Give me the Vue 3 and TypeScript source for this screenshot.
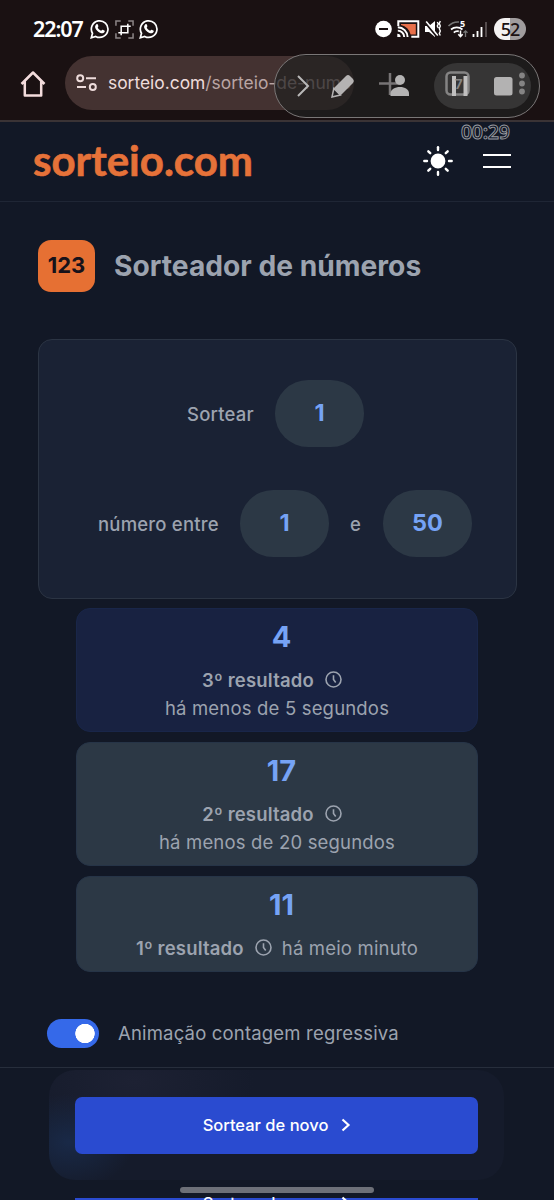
<script setup lang="ts">
interface Result {
  value: number
  label: string
  ago: string
  stacked: boolean
  latest: boolean
}

const results: Result[] = [
  { value: 4, label: '3º resultado', ago: 'há menos de 5 segundos', stacked: true, latest: true },
  { value: 17, label: '2º resultado', ago: 'há menos de 20 segundos', stacked: true, latest: false },
  { value: 11, label: '1º resultado', ago: 'há meio minuto', stacked: false, latest: false },
]

const rays = [0, 45, 90, 135, 180, 225, 270, 315]
</script>

<template>
  <div class="phone">
    <div class="status">
      <span class="time">22:07</span>
      <svg class="wa" viewBox="0 0 20 20">
        <path d="M1.3 18.7l1.2-4.4a8.3 8.3 0 1 1 3.2 3.1z" />
        <path class="solid" d="M6.2 5.6c.9-.9 1.5-.5 1.9.6.5 1.2.2 1.5-.4 2.2.8 1.7 1.9 2.7 3.5 3.4.8-.9 1.2-1.3 2.1-.9 1.5.7 1.9.9 1.2 2.1-.9 1.5-2.7 1.6-4.6.7-2.3-1.1-4-2.9-4.7-5-.3-1.2.1-2.3 1-3.1z" />
      </svg>
      <svg class="crop" viewBox="0 0 20 20">
        <path class="dim" d="M1 6V1h5M14 1h5v5M19 14v5h-5M6 19H1v-5" />
        <path d="M3.5 13.5h10V4M6.5 16V6.5h10" />
      </svg>
      <svg class="wa" viewBox="0 0 20 20">
        <path d="M1.3 18.7l1.2-4.4a8.3 8.3 0 1 1 3.2 3.1z" />
        <path class="solid" d="M6.2 5.6c.9-.9 1.5-.5 1.9.6.5 1.2.2 1.5-.4 2.2.8 1.7 1.9 2.7 3.5 3.4.8-.9 1.2-1.3 2.1-.9 1.5.7 1.9.9 1.2 2.1-.9 1.5-2.7 1.6-4.6.7-2.3-1.1-4-2.9-4.7-5-.3-1.2.1-2.3 1-3.1z" />
      </svg>
      <svg class="system" viewBox="0 0 116 24">
        <circle cx="8.5" cy="12" r="8.3" fill="#fff" />
        <path d="M4 12h9" stroke="#1a1112" stroke-width="2" />
        <path d="M23.3 9V4.3h20v15.4h-7" fill="none" stroke="#fff" stroke-width="2" />
        <path d="M26 7h14.8v10.4h-5.2A13 13 0 0 0 26 8z" fill="#e8704a" />
        <path d="M22.8 10.2A10 10 0 0 1 32.6 20M22.8 13.6A6.5 6.5 0 0 1 29.2 20" fill="none" stroke="#fff" stroke-width="1.9" />
        <path d="M22.3 16.8a3.3 3.3 0 0 1 3.3 3.3h-3.3z" fill="#fff" />
        <path d="M50 9h4l6-5v16l-6-5h-4z" fill="#fff" />
        <path d="M50.5 5.5L62 19.5" stroke="#1a1112" stroke-width="2.6" />
        <path d="M51.2 4.5L62.8 18.5" stroke="#fff" stroke-width="1.6" />
        <path d="M62.3 5l1 2-1 2 1 2M65.3 4l-1 2.5 1 2.5-1 2.5 1 2.5-1 2.5 1 2" fill="none" stroke="#fff" stroke-width="1.4" />
        <path d="M73.5 9a13 13 0 0 1 10.5-4" fill="none" stroke="#777" stroke-width="1.6" />
        <path d="M76 12.5a9 9 0 0 1 11.5 0M78.8 15.6a5.2 5.2 0 0 1 5-1.2" fill="none" stroke="#fff" stroke-width="1.8" />
        <path d="M85.5 13.5v6M83.3 17.3l2.2 2.3 2.2-2.3" fill="none" stroke="#fff" stroke-width="1.5" />
        <path d="M90.5 20v-6M88.5 15.8l2-2 2 2" fill="none" stroke="#777" stroke-width="1.3" />
        <text x="85" y="10.3" class="five">5</text>
        <path d="M98.5 20v-3M102.5 20v-6M106.5 20V10" stroke="#fff" stroke-width="1.8" />
        <path d="M111 20V5" stroke="#5c5455" stroke-width="1.8" />
      </svg>
      <span class="battery">52</span>
    </div>

    <div class="toolbar">
      <svg class="home" viewBox="0 0 26 28">
        <path d="M1.5 14L13 2.5 24.5 14M4.8 11.5v14h16.4v-14" />
      </svg>
      <div class="url">
        <svg class="tune" viewBox="0 0 22 18">
          <circle cx="4.2" cy="4.2" r="3" />
          <path d="M10 4.2h10M1 13h9" />
          <circle cx="16.8" cy="13" r="3" />
        </svg>
        <span>sorteio.com<span class="path">/sorteio-de-nume</span></span>
      </div>
    </div>

    <div class="recorder">
      <svg viewBox="0 0 266 64">
        <rect x="160" y="9" width="97" height="46" rx="23" fill="#363535" />
        <path d="M24 22l10 10-10 10" fill="none" stroke="#b9b8b8" stroke-width="2" />
        <path d="M58 43l2-9 12-12a3 3 0 0 1 4 0l3 3a3 3 0 0 1 0 4L67 41z" fill="#b5b3b3" />
        <path d="M58 43l1.8-8.5 6.5 6.5z" fill="#252324" stroke="#b5b3b3" stroke-width="1.5" />
        <path d="M116 19v22M105 29.5h20" stroke="#777475" stroke-width="2.5" />
        <circle cx="126" cy="26" r="5" fill="#b4b3b3" />
        <path d="M116.5 42v-2.5c0-4 4.5-6.5 9.5-6.5s9 2.5 9 6.5V42z" fill="#b4b3b3" />
        <rect x="172.5" y="18.5" width="22" height="22" rx="4" fill="none" stroke="#858484" stroke-width="2.5" />
        <path d="M180 22v20M191.5 22v20" stroke="#c0bfbf" stroke-width="4" />
        <text x="181" y="34.5" class="tabs">7</text>
        <rect x="220" y="23" width="18.5" height="18.5" rx="2.5" fill="#b3b2b2" />
        <g fill="#858484">
          <circle cx="248" cy="21.5" r="2.9" />
          <circle cx="248" cy="29.5" r="2.9" />
          <circle cx="248" cy="37.5" r="2.9" />
        </g>
      </svg>
    </div>
    <span class="timer">00:29</span>

    <header class="header">
      <svg class="logo" viewBox="0 0 224 60">
        <text x="1" y="45" textLength="220" lengthAdjust="spacingAndGlyphs">sorteio.com</text>
      </svg>
      <svg class="sun" viewBox="0 0 30 30">
        <circle cx="15" cy="15" r="6.2" fill="#fff" />
        <path v-for="a in rays" :key="a" d="M15 1.3v2.7" :transform="`rotate(${a} 15 15)`" />
      </svg>
      <span class="menu"></span>
    </header>

    <main>
      <div class="title">
        <span class="badge">123</span>
        <h1>Sorteador de números</h1>
      </div>

      <section class="card">
        <div class="row first">
          <span class="lbl">Sortear</span>
          <span class="pill">1</span>
        </div>
        <div class="row second">
          <span class="lbl">número entre</span>
          <span class="pill">1</span>
          <span class="lbl and">e</span>
          <span class="pill">50</span>
        </div>
      </section>

      <section class="results">
        <article v-for="r in results" :key="r.value" class="result" :class="{ latest: r.latest, stacked: r.stacked }">
          <strong class="value">{{ r.value }}</strong>
          <div class="meta">
            <div class="who">
              <b>{{ r.label }}</b>
              <svg class="clock" viewBox="0 0 17 17">
                <circle cx="8.5" cy="8.5" r="7.5" />
                <path d="M8.5 4.2v4.3l2.2 3" />
              </svg>
            </div>
            <span class="ago">{{ r.ago }}</span>
          </div>
        </article>
      </section>

      <div class="option">
        <span class="switch"></span>
        <span class="caption">Animação contagem regressiva</span>
      </div>
    </main>

    <footer class="dock">
      <div class="panel">
        <button class="go">
          <span>Sortear de novo</span>
          <svg viewBox="0 0 10 14"><path d="M1.5 1.5L7.5 7l-6 5.5" /></svg>
        </button>
      </div>
      <div class="peek">
        <div class="go">
          <span>Sortear de novo</span>
          <svg viewBox="0 0 10 14"><path d="M1.5 1.5L7.5 7l-6 5.5" /></svg>
        </div>
      </div>
      <span class="handle"></span>
    </footer>
  </div>
</template>

<style>
body {
  margin: 0;
  background: #121826;
}
</style>

<style scoped>
.phone {
  position: relative;
  width: 554px;
  height: 1200px;
  overflow: hidden;
  display: flex;
  flex-direction: column;
  background: #121826;
  color: #9ca3af;
  font-family: Inter, 'Liberation Sans', sans-serif;
}
.phone * {
  box-sizing: border-box;
}
.phone svg {
  flex: none;
}
.status {
  height: 56px;
  flex: none;
  display: flex;
  align-items: center;
  padding: 2px 28px 0 33px;
  background: #1a1112;
}
.time {
  width: 57px;
  color: #fff;
  font: 600 21.5px/24px 'Noto Sans', sans-serif;
  letter-spacing: -1.1px;
  white-space: nowrap;
}
.wa {
  width: 20px;
  height: 20px;
  fill: none;
  stroke: #fff;
  stroke-width: 1.7;
}
.wa .solid {
  fill: #fff;
  stroke: none;
}
.crop {
  width: 19px;
  height: 19px;
  margin: 0 5px;
  fill: none;
  stroke: #fff;
  stroke-width: 1.6;
}
.crop .dim {
  stroke: #8c8586;
}
.system {
  width: 116px;
  height: 24px;
  margin-left: auto;
}
.five {
  font: 700 9px 'Noto Sans', sans-serif;
  fill: #fff;
}
.battery {
  width: 32px;
  height: 22px;
  margin-left: 3px;
  border-radius: 11px;
  background: linear-gradient(90deg, #f4f2f2 0 50%, #a09c9d 50%);
  color: #1a1112;
  font: 500 18px/22px 'Noto Sans', sans-serif;
  letter-spacing: -1px;
  text-align: center;
}
.toolbar {
  height: 66px;
  flex: none;
  display: flex;
  padding-left: 20px;
  border-bottom: 2px solid #3a3335;
  background: #1a1112;
}
.home {
  width: 26px;
  height: 28px;
  margin: 14px 19px 0 0;
  fill: none;
  stroke: #f3dcdc;
  stroke-width: 2.5;
  stroke-linejoin: round;
}
.url {
  width: 289px;
  height: 54px;
  display: flex;
  align-items: center;
  gap: 10px;
  padding: 0 0 0 11px;
  border-radius: 27px;
  background: #443231;
  color: #eedcdb;
  font: 400 17.4px/24px Inter, sans-serif;
  white-space: nowrap;
}
.path {
  color: #b9a5a4;
}
.tune {
  width: 22px;
  height: 18px;
  fill: none;
  stroke: #eedcdb;
  stroke-width: 2;
}
.recorder {
  position: absolute;
  left: 274px;
  top: 54px;
  width: 266px;
  height: 64px;
  border-radius: 32px;
  border: 1px solid #7a7777;
  background: rgba(32, 31, 31, 0.7);
}
.recorder svg {
  display: block;
  width: 266px;
  height: 64px;
  margin: -1px;
}
.tabs {
  font: 700 13px Inter, sans-serif;
  fill: #858484;
}
.timer {
  position: absolute;
  left: 461px;
  top: 121px;
  font: 600 19.5px/22px 'Noto Sans', sans-serif;
  letter-spacing: -0.3px;
  color: #121826;
  -webkit-text-stroke: 0.9px #9a9ca1;
}
.header {
  height: 80px;
  flex: none;
  display: flex;
  align-items: center;
  padding: 0 43px 2px 32px;
  border-bottom: 1px solid #1f2635;
}
.logo {
  width: 224px;
  height: 60px;
}
.logo text {
  font: 700 42.5px Lato, sans-serif;
  fill: #e67239;
  stroke: #e67239;
  stroke-width: 0.6px;
  stroke-linejoin: round;
}
.sun {
  width: 30px;
  height: 30px;
  margin-left: auto;
  stroke: #fff;
  stroke-width: 2.4;
  stroke-linecap: round;
}
.menu {
  width: 28px;
  height: 14px;
  margin-left: 30px;
  border: solid #fff;
  border-width: 2px 0;
}
main {
  display: flex;
  flex-direction: column;
}
.title {
  display: flex;
  align-items: center;
  margin: 38px 0 47px 38px;
}
.badge {
  width: 57px;
  height: 52px;
  margin-right: 19px;
  border-radius: 13px;
  background: #e67033;
  color: #17121a;
  font-size: 22px;
  font-weight: 700;
  line-height: 51px;
  text-align: center;
}
h1 {
  margin: 0;
  font-size: 28.2px;
  font-weight: 700;
  line-height: 32px;
  white-space: nowrap;
}
.card {
  width: 479px;
  height: 260px;
  margin-left: 38px;
  padding-top: 40px;
  display: flex;
  flex-direction: column;
  gap: 43px;
  border: 1px solid #2b3443;
  border-radius: 14px;
  background: #1a2234;
}
.row {
  display: flex;
  align-items: center;
}
.first {
  padding-left: 148px;
}
.second {
  padding-left: 59px;
}
.lbl {
  font-size: 18.5px;
  font-weight: 500;
  letter-spacing: 0.2px;
  white-space: nowrap;
}
.first .lbl {
  width: 88px;
}
.second .lbl {
  width: 142px;
}
.second .and {
  width: 54px;
  padding-left: 21px;
}
.pill {
  width: 89px;
  height: 67px;
  border-radius: 33px;
  background: #2c3845;
  color: #76a3f5;
  font-size: 23.5px;
  font-weight: 700;
  line-height: 66px;
  text-align: center;
}
.results {
  display: flex;
  flex-direction: column;
  gap: 10px;
  width: 402px;
  margin: 9px 0 0 76px;
}
.result {
  height: 96px;
  display: flex;
  flex-direction: column;
  align-items: center;
  border: 1px solid #263447;
  border-radius: 14px;
  background: #2c3845;
}
.stacked {
  height: 124px;
}
.latest {
  border-color: #192649;
  background: #182241;
}
.value {
  margin: 11px 0 0 9px;
  color: #76a3f5;
  font-size: 29px;
  line-height: 34px;
}
.meta {
  display: flex;
  align-items: center;
  margin-top: 12px;
  font-size: 18.5px;
  letter-spacing: 0.18px;
  line-height: 28px;
  white-space: nowrap;
}
.stacked .meta {
  flex-direction: column;
}
.who {
  display: flex;
  align-items: center;
  margin-right: 10px;
}
.who b {
  font-weight: 600;
}
.clock {
  width: 17px;
  height: 17px;
  margin: 0 0 1px 11px;
  fill: none;
  stroke: #9ca3af;
  stroke-width: 1.6;
}
.option {
  display: flex;
  align-items: center;
  margin: 47px 0 0 47px;
}
.switch {
  width: 52px;
  height: 29px;
  margin-right: 19px;
  border-radius: 15px;
  background: radial-gradient(circle at 38px 14.5px, #fff 9.4px, #3569e9 10px);
}
.caption {
  margin-top: -2px;
  font-size: 18.5px;
  letter-spacing: 0.18px;
  line-height: 28px;
  white-space: nowrap;
}
.dock {
  position: absolute;
  left: 0;
  top: 1067px;
  width: 554px;
  height: 133px;
  border-top: 1px solid #272e3c;
  background: #121826;
}
.panel {
  width: 455px;
  height: 110px;
  margin: 2px 0 0 49px;
  padding: 27px 26px 0;
  border-radius: 26px;
  background:
    radial-gradient(ellipse 65px 48px at 20px 72px, #192947, transparent),
    radial-gradient(ellipse 120px 65px at 85px 12px, #1d2133, transparent),
    #151b2b;
}
.go {
  width: 403px;
  height: 57px;
  display: flex;
  align-items: center;
  justify-content: center;
  gap: 13px;
  padding: 0 0 1px 1px;
  border: 0;
  border-radius: 7px;
  background: #2a4bd0;
  color: #fff;
  font: 500 16.5px/22px Inter, sans-serif;
  white-space: nowrap;
}
.go svg {
  width: 10px;
  height: 14px;
  fill: none;
  stroke: #fff;
  stroke-width: 2.2;
}
.peek {
  height: 4px;
  margin: 16px 0 0 75px;
  overflow: hidden;
}
.peek .go {
  align-items: flex-start;
  border-radius: 0;
  background: linear-gradient(transparent 2px, #2a4bd0 2px);
}
.peek span {
  margin-top: -4px;
}
.handle {
  position: absolute;
  left: 180px;
  bottom: 7px;
  width: 194px;
  height: 6px;
  border-radius: 3px;
  background: #6d7078;
}
</style>
